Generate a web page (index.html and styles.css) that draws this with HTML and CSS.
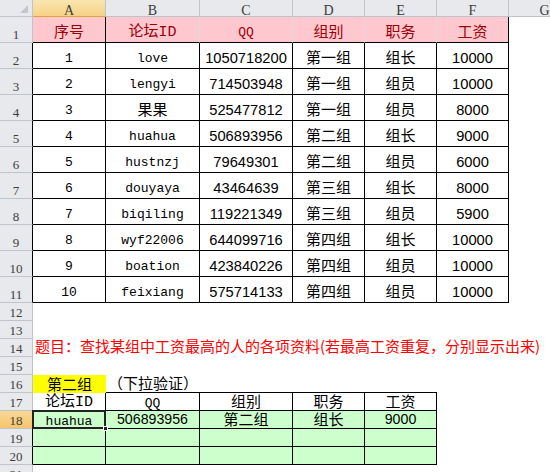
FILE: index.html
```html
<!DOCTYPE html>
<html lang="zh-CN">
<head>
<meta charset="utf-8">
<title>Sheet</title>
<link rel="stylesheet" href="styles.css">
</head>
<body>
<div class="sheet">
  <div class="row h">
    <div class="cell corner"><svg class="tri" width="8" height="8" viewBox="0 0 8 8"><polygon points="8,0 8,8 0,8" fill="#c3c7cc"/></svg></div>
    <div class="cell ch sel-col">A</div>
    <div class="cell ch">B</div>
    <div class="cell ch">C</div>
    <div class="cell ch">D</div>
    <div class="cell ch">E</div>
    <div class="cell ch">F</div>
    <div class="cell ch">G</div>
  </div>

  <div class="row t">
    <div class="cell rh">1</div>
    <div class="cell hd bk cj">序号</div>
    <div class="cell hd lt mx">论坛ID</div>
    <div class="cell hd lt mo">QQ</div>
    <div class="cell hd lt cj">组别</div>
    <div class="cell hd lt cj">职务</div>
    <div class="cell hd bk cj">工资</div>
  </div>

  <div class="row t"><div class="cell rh dk">2</div><div class="cell b mo">1</div><div class="cell b mo">love</div><div class="cell b nu">1050718200</div><div class="cell b cj">第一组</div><div class="cell b cj">组长</div><div class="cell b nu">10000</div></div>
  <div class="row t"><div class="cell rh dk">3</div><div class="cell b mo">2</div><div class="cell b mo">lengyi</div><div class="cell b nu">714503948</div><div class="cell b cj">第一组</div><div class="cell b cj">组员</div><div class="cell b nu">10000</div></div>
  <div class="row t"><div class="cell rh dk">4</div><div class="cell b mo">3</div><div class="cell b cj">果果</div><div class="cell b nu">525477812</div><div class="cell b cj">第一组</div><div class="cell b cj">组员</div><div class="cell b nu">8000</div></div>
  <div class="row t"><div class="cell rh dk">5</div><div class="cell b mo">4</div><div class="cell b mo">huahua</div><div class="cell b nu">506893956</div><div class="cell b cj">第二组</div><div class="cell b cj">组长</div><div class="cell b nu">9000</div></div>
  <div class="row t"><div class="cell rh dk">6</div><div class="cell b mo">5</div><div class="cell b mo">hustnzj</div><div class="cell b nu">79649301</div><div class="cell b cj">第二组</div><div class="cell b cj">组员</div><div class="cell b nu">6000</div></div>
  <div class="row t"><div class="cell rh dk">7</div><div class="cell b mo">6</div><div class="cell b mo">douyaya</div><div class="cell b nu">43464639</div><div class="cell b cj">第三组</div><div class="cell b cj">组长</div><div class="cell b nu">8000</div></div>
  <div class="row t"><div class="cell rh dk">8</div><div class="cell b mo">7</div><div class="cell b mo">biqiling</div><div class="cell b nu">119221349</div><div class="cell b cj">第三组</div><div class="cell b cj">组员</div><div class="cell b nu">5900</div></div>
  <div class="row t"><div class="cell rh dk">9</div><div class="cell b mo">8</div><div class="cell b mo">wyf22006</div><div class="cell b nu">644099716</div><div class="cell b cj">第四组</div><div class="cell b cj">组长</div><div class="cell b nu">10000</div></div>
  <div class="row t"><div class="cell rh dk">10</div><div class="cell b mo">9</div><div class="cell b mo">boation</div><div class="cell b nu">423840226</div><div class="cell b cj">第四组</div><div class="cell b cj">组员</div><div class="cell b nu">10000</div></div>
  <div class="row t"><div class="cell rh dk">11</div><div class="cell b mo">10</div><div class="cell b mo">feixiang</div><div class="cell b nu">575714133</div><div class="cell b cj">第四组</div><div class="cell b cj">组员</div><div class="cell b nu">10000</div></div>

  <div class="row s"><div class="cell rh">12</div></div>
  <div class="row s"><div class="cell rh">13</div></div>
  <div class="row s"><div class="cell rh">14</div><div class="cell cj task">题目：查找某组中工资最高的人的各项资料(若最高工资重复，分别显示出来)</div></div>
  <div class="row s"><div class="cell rh">15</div></div>
  <div class="row s">
    <div class="cell rh">16</div>
    <div class="cell cj pick">第二组</div>
    <div class="cell cj note ub">（下拉验证）</div>
    <div class="cell ub"></div>
    <div class="cell ub"></div>
    <div class="cell ub"></div>
  </div>
  <div class="row s up">
    <div class="cell rh">17</div>
    <div class="cell b mx">论坛ID</div>
    <div class="cell b mo">QQ</div>
    <div class="cell b cj">组别</div>
    <div class="cell b cj">职务</div>
    <div class="cell b cj">工资</div>
  </div>
  <div class="row s up">
    <div class="cell rh dk sel-row">18</div>
    <div class="cell b g mo act">huahua<span class="selbox"></span><span class="handle"></span></div>
    <div class="cell b g nu">506893956</div>
    <div class="cell b g cj">第二组</div>
    <div class="cell b g cj">组长</div>
    <div class="cell b g nu">9000</div>
  </div>
  <div class="row s"><div class="cell rh dk">19</div><div class="cell b g"></div><div class="cell b g"></div><div class="cell b g"></div><div class="cell b g"></div><div class="cell b g"></div></div>
  <div class="row s"><div class="cell rh dk">20</div><div class="cell b g"></div><div class="cell b g"></div><div class="cell b g"></div><div class="cell b g"></div><div class="cell b g"></div></div>
  <div class="row s"><div class="cell rh">21</div></div>
</div>
</body>
</html>
```

FILE: styles.css
```css
html, body {
  margin: 0;
  padding: 0;
  background: #ffffff;
}
body {
  width: 550px;
  height: 472px;
  overflow: hidden;
}
.sheet {
  display: flex;
  flex-direction: column;
  width: 581px;
}
.row {
  display: grid;
  grid-template-columns: 33px 73px 94px 93px 72px 72px 72px 72px;
}
.row.h { height: 17px; }
.row.t { height: 26px; }
.row.s { height: 18px; }

.cell {
  box-sizing: border-box;
  display: flex;
  align-items: center;
  justify-content: center;
  white-space: nowrap;
  line-height: 16px;
  min-width: 0;
  color: #000;
}
.s .cell { line-height: 12px; }

/* headers */
.corner, .ch, .rh {
  background: #e7e9ec;
  border-right: 1px solid #bfc4ca;
  border-bottom: 1px solid #bfc4ca;
}
.corner {
  align-items: flex-end;
  justify-content: flex-end;
  padding: 0 4px 3px 0;
}
.tri { display: block; }
.ch {
  align-items: flex-end;
  font-family: "Liberation Serif", serif;
  font-size: 14px;
  line-height: 11px;
  color: #3c3c3c;
}
.rh, .s .rh {
  align-items: flex-end;
  font-family: "Liberation Serif", serif;
  font-size: 13px;
  line-height: 15px;
  color: #3c3c3c;
}
.rh.dk { border-right-color: #000; }
.sel-col {
  background: linear-gradient(#fae6b0, #f6d286);
  border-bottom-color: #e8a23c;
}
.sel-row {
  background: linear-gradient(#f9d894, #f5c56e);
  border-right-color: #e8a23c;
  color: #222;
}

/* fonts */
.cj {
  font-family: "Noto Sans CJK SC", sans-serif;
  font-size: 15px;
  padding-top: 2px;
}
.s .cj { padding-top: 0; padding-bottom: 1px; }
.up .cj { padding-bottom: 2px; }
.mo {
  font-family: "Liberation Mono", "Noto Sans CJK SC", monospace;
  font-size: 13px;
  padding-top: 6px;
}
.up .mo { padding-top: 5px; }
.mx {
  font-family: "Liberation Mono", "Noto Sans CJK SC", monospace;
  font-size: 15px;
  padding-top: 6px;
}
.up .mx { padding-top: 2px; padding-bottom: 0; }
.nu {
  font-family: "Liberation Sans", Arial, sans-serif;
  font-size: 14.7px;
}
.t .nu { padding-top: 5px; }
.s .nu { font-size: 14.2px; padding-top: 0; padding-bottom: 2px; }

/* data table */
.hd {
  background: #ffc7ce;
  color: #9c0006;
  border-bottom: 1px solid #000;
}
.hd.bk { border-right: 1px solid #000; }
.hd.lt { border-right: 1px solid #dcdcdc; }
.b {
  border-right: 1px solid #000;
  border-bottom: 1px solid #000;
}
.g { background: #ccffcc; }
.ub { border-bottom: 1px solid #000; }

.task {
  grid-column: 2 / -1;
  justify-content: flex-start;
  padding-left: 2px;
  color: #ff0000;
}
.s .task { padding-bottom: 5px; }
.pick { background: #ffff00; }
.note {
  justify-content: flex-start;
  padding-left: 2px;
}

/* active cell */
.act { position: relative; }
.selbox {
  position: absolute;
  left: -1px;
  top: -1px;
  right: -1px;
  bottom: -1px;
  box-sizing: border-box;
  border: 2px solid #222;
}
.handle {
  position: absolute;
  right: -3px;
  bottom: -3px;
  width: 3px;
  height: 3px;
  background: #222;
  border: 1px solid #fff;
}
```
